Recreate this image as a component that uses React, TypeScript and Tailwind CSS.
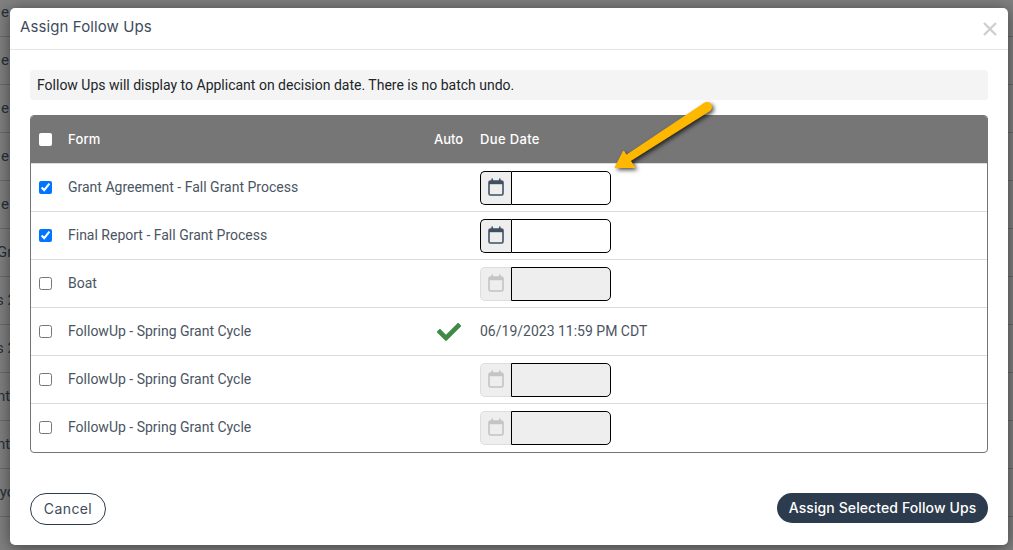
import React from "react";
import { FaCheck } from "react-icons/fa";

function Cal({ muted }: { muted?: boolean }) {
  const c = muted ? "#c4c4c4" : "#3f5064";
  return (
    <svg width="16" height="18" viewBox="0 0 16 18" fill="none" className="mb-[2px]">
      <rect x="1" y="3" width="14" height="14" rx="1.5" stroke={c} strokeWidth="1.6" />
      <rect x="1" y="3" width="14" height="3.2" fill={c} />
      <rect x="3.4" y="0.5" width="1.6" height="3" fill={c} />
      <rect x="11" y="0.5" width="1.6" height="3" fill={c} />
    </svg>
  );
}

function DateField({ enabled }: { enabled: boolean }) {
  return (
    <div className="flex h-[34px] w-[131px]">
      <div
        className={
          enabled
            ? "flex w-[31px] items-center justify-center rounded-l-[5px] border border-r-0 border-black bg-[#eeeeee]"
            : "flex w-[31px] items-center justify-center rounded-l-[5px] border border-r-0 border-[#dedede] bg-[#eeeeee]"
        }
      >
        <Cal muted={!enabled} />
      </div>
      <div
        className={
          enabled
            ? "flex-1 rounded-r-[5px] border border-black bg-white"
            : "flex-1 rounded-r-[5px] border border-black bg-[#eeeeee]"
        }
      />
    </div>
  );
}

const rows = [
  { name: "Grant Agreement - Fall Grant Process", checked: true, enabled: true },
  { name: "Final Report - Fall Grant Process", checked: true, enabled: true },
  { name: "Boat", checked: false, enabled: false },
  { name: "FollowUp - Spring Grant Cycle", checked: false, auto: true },
  { name: "FollowUp - Spring Grant Cycle", checked: false, enabled: false },
  { name: "FollowUp - Spring Grant Cycle", checked: false, enabled: false },
];

const bgRows = [
  { t: "e", c: "ml-[1px]" },
  { t: "e", c: "ml-[1px]" },
  { t: "e", c: "ml-[1px]" },
  { t: "e", c: "ml-[1px]" },
  { t: "e", c: "ml-[1px]" },
  { t: "Gra", c: "-ml-[3px]" },
  { t: "s 2", c: "-ml-[4px]" },
  { t: "s 2", c: "-ml-[4px]" },
  { t: "nt", c: "-ml-[3px]" },
  { t: "nt", c: "-ml-[3px]" },
  { t: "cyc", c: "-ml-[8px]" },
  { t: "", c: "" },
];

export default function App() {
  return (
    <div className="relative h-[550px] w-[1013px] overflow-hidden bg-[#808080] font-['Roboto',sans-serif]">
      <div className="-mt-[11px] flex flex-col">
        {bgRows.map((r, i) => (
          <div key={i} className="flex h-[48px] items-center border-b border-[#696969] text-[15px] text-[#26303d]">
            <span className={"whitespace-nowrap " + r.c}>{r.t}</span>
          </div>
        ))}
      </div>

      <div className="absolute top-[8px] left-[10px] flex h-[537px] w-[998px] flex-col rounded-[5px] bg-white shadow-[0_2px_16px_rgba(0,0,0,0.5)]">
        <div className="flex h-[42px] shrink-0 items-center justify-between border-b border-[#e5e5e5] pr-[10px] pl-[10px]">
          <h2 className="pb-[3px] font-['Inter',sans-serif] text-[15px] font-normal tracking-[0.1px] text-[#3f4b5b]">
            Assign Follow Ups
          </h2>
          <svg width="16" height="16" viewBox="0 0 16 16" className="mt-[1px]">
            <path d="M2 2 L14 14 M14 2 L2 14" stroke="#cfcfcf" strokeWidth="2.4" />
          </svg>
        </div>

        <div className="flex flex-1 flex-col px-[20px] pt-[20px]">
          <div className="flex h-[30px] items-center rounded-[4px] bg-[#f4f4f4] px-[7px] text-[14px] text-[#212529]">
            Follow Ups will display to Applicant on decision date. There is no batch undo.
          </div>

          <div className="mt-[15px] overflow-hidden rounded-[4px] border border-[#757575]">
            <div className="grid h-[47px] grid-cols-[37px_366px_46px_1fr] items-center bg-[#767676] font-['Inter',sans-serif] text-[13px] font-medium text-white">
              <div className="pl-[8px]">
                <input type="checkbox" readOnly className="block h-[13px] w-[13px] appearance-none rounded-[2px] bg-white" />
              </div>
              <div className="tracking-[0.2px]">Form</div>
              <div>Auto</div>
              <div className="tracking-[0.35px]">Due Date</div>
            </div>
            {rows.map((r, i) => (
              <div
                key={i}
                className="grid h-[48px] grid-cols-[37px_366px_46px_1fr] items-center border-t border-[#dcdcdc] text-[14px] text-[#4a5563] first:border-t-0 last:h-[49px] last:pb-[1px]"
              >
                <div className="pl-[8px]">
                  <input type="checkbox" checked={r.checked} readOnly className="block h-[13px] w-[13px]" />
                </div>
                <div>{r.name}</div>
                <div className="flex justify-center pr-[17px]">
                  {r.auto && <FaCheck className="h-[24px] w-[24px] text-[#3f8a46]" />}
                </div>
                <div>{r.auto ? "06/19/2023 11:59 PM CDT" : <DateField enabled={!!r.enabled} />}</div>
              </div>
            ))}
          </div>

          <div className="mt-[40px] flex items-start justify-between">
            <button className="h-[32px] w-[76px] rounded-full border border-[#2d3b4e] bg-white pb-[2px] font-['Inter',sans-serif] text-[14px] tracking-[0.4px] text-[#3f4b5b]">
              Cancel
            </button>
            <button className="h-[30px] w-[211px] rounded-full bg-[#2d3b4e] pb-[2px] font-['Inter',sans-serif] text-[14px] font-medium tracking-[0.1px] text-white">
              Assign Selected Follow Ups
            </button>
          </div>
        </div>
      </div>

      <svg
        width="120"
        height="90"
        viewBox="0 0 120 90"
        className="absolute top-[95px] left-[605px] drop-shadow-[2px_2px_2px_rgba(0,0,0,0.7)]"
      >
        <circle cx="102" cy="12" r="5" fill="#ffb800" />
        <polygon points="104.7,16.2 99.3,7.8 21,60 25,66.4" fill="#ffb800" />
        <polygon points="10,72.5 18.5,56 30,72.5" fill="#ffb800" stroke="#ffb800" strokeLinejoin="round" />
      </svg>
    </div>
  );
}
